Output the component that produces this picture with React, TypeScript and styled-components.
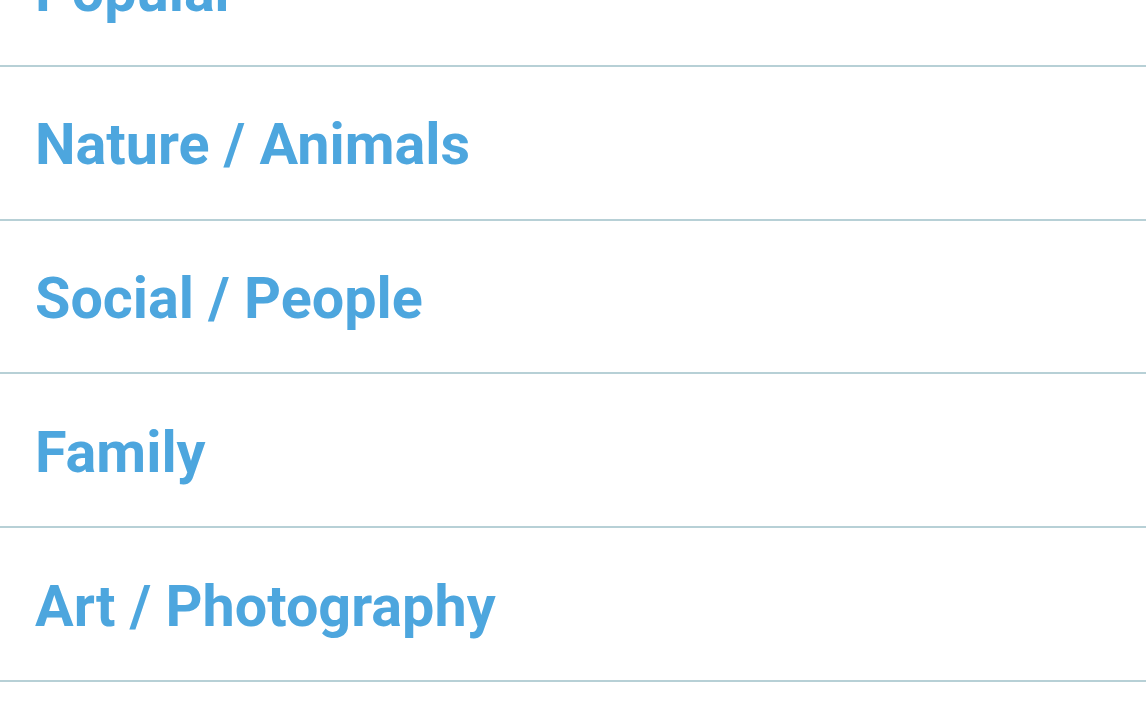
import React from "react";
import styled, { createGlobalStyle } from "styled-components";

const Global = createGlobalStyle`
  html, body {
    margin: 0;
    padding: 0;
    background: #ffffff;
    overflow: hidden;
  }
  body {
    width: 1146px;
    height: 716px;
  }
`;

const List = styled.ul`
  list-style: none;
  margin: -87px 0 0 0;
  padding: 0;
  width: 1146px;
  font-family: Roboto, "Liberation Sans", sans-serif;
`;

const Row = styled.li`
  box-sizing: border-box;
  height: 153.75px;
  display: flex;
  align-items: center;
  padding: 0 0 0 35px;
  border-bottom: 2px solid #b7d0d6;
`;

const Label = styled.span`
  font-size: 57.5px;
  font-weight: 700;
  color: #4da6de;
  line-height: 1;
  margin-top: 5px;
`;

const categories = [
  "Popular",
  "Nature / Animals",
  "Social / People",
  "Family",
  "Art / Photography",
];

export default function App() {
  return (
    <>
      <Global />
      <List>
        {categories.map((c) => (
          <Row key={c}>
            <Label>{c}</Label>
          </Row>
        ))}
      </List>
    </>
  );
}
